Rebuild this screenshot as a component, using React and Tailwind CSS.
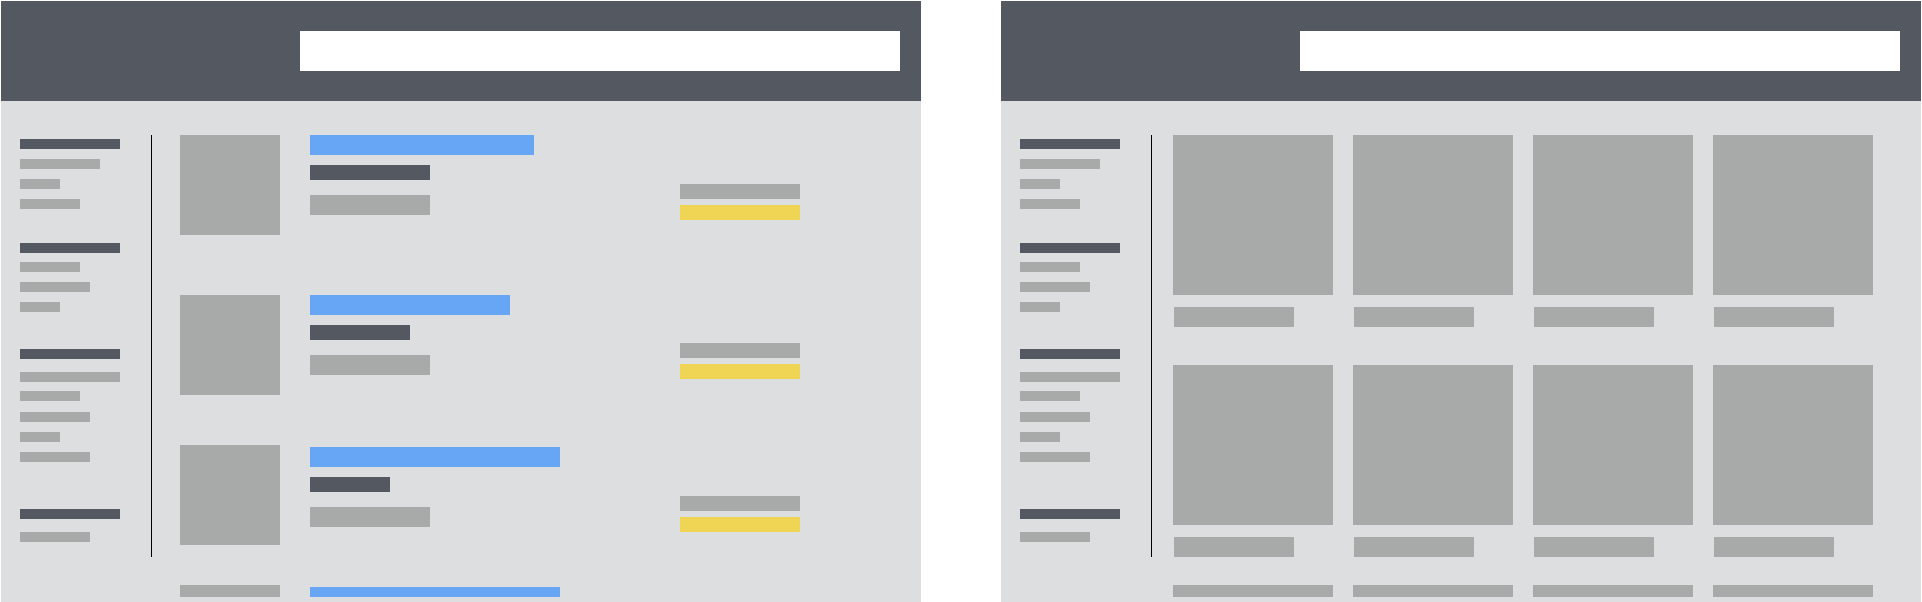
const bar = "bg-[#a8aaa9]";
const dark = "bg-[#535861]";

const listItems = [
  { blue: 224, dark: 120, pad: 0, side: 49, gap: 60 },
  { blue: 200, dark: 100, pad: 0, side: 48, gap: 50 },
  { blue: 250, dark: 80, pad: 2, side: 51, gap: 40 },
  { blue: 250, dark: 100, pad: 2, side: 51, gap: 0 },
];

function Sidebar() {
  return (
    <div className="w-[131px] shrink-0 pt-[4px] flex flex-col">
      <div className={`${dark} h-[10px] w-[100px]`} />
      <div className={`${bar} h-[10px] w-[80px] mt-[10px]`} />
      <div className={`${bar} h-[10px] w-[40px] mt-[10px]`} />
      <div className={`${bar} h-[10px] w-[60px] mt-[10px]`} />

      <div className={`${dark} h-[10px] w-[100px] mt-[34px]`} />
      <div className={`${bar} h-[10px] w-[60px] mt-[9px]`} />
      <div className={`${bar} h-[10px] w-[70px] mt-[10px]`} />
      <div className={`${bar} h-[10px] w-[40px] mt-[10px]`} />

      <div className={`${dark} h-[10px] w-[100px] mt-[37px]`} />
      <div className={`${bar} h-[10px] w-[100px] mt-[13px]`} />
      <div className={`${bar} h-[10px] w-[60px] mt-[9px]`} />
      <div className={`${bar} h-[10px] w-[70px] mt-[11px]`} />
      <div className={`${bar} h-[10px] w-[40px] mt-[10px]`} />
      <div className={`${bar} h-[10px] w-[70px] mt-[10px]`} />

      <div className={`${dark} h-[10px] w-[100px] mt-[47px]`} />
      <div className={`${bar} h-[10px] w-[70px] mt-[13px]`} />
    </div>
  );
}

function Panel({ children, mainOffset }) {
  return (
    <div className="w-[920px] h-[601px] shrink-0 flex flex-col bg-[#dddee0]">
      <header className={`${dark} h-[100px] shrink-0 flex items-center`}>
        <div className="ml-[299px] h-10 w-[600px] bg-white" />
      </header>
      <div className="flex-1 min-h-0 pb-[5px] flex flex-col">
        <div className="flex-1 min-h-0 overflow-hidden flex items-start pt-[34px] pl-[19px]">
          <Sidebar />
          <div className="w-px h-[422px] bg-black shrink-0" />
          <div className={mainOffset}>{children}</div>
        </div>
      </div>
    </div>
  );
}

function ListView() {
  return (
    <div className="flex flex-col">
      {listItems.map((it, i) => (
        <div key={i} className="flex items-start" style={{ marginBottom: it.gap }}>
          <div className={`${bar} h-[100px] w-[100px] shrink-0`} />
          <div className="ml-[30px] w-[370px] flex flex-col" style={{ paddingTop: it.pad }}>
            <div className="h-5 bg-[#67a6f4]" style={{ width: it.blue }} />
            <div className={`${dark} h-[15px] mt-[10px]`} style={{ width: it.dark }} />
            <div className={`${bar} h-5 w-[120px] mt-[15px]`} />
          </div>
          <div className="flex flex-col w-[120px]" style={{ paddingTop: it.side }}>
            <div className={`${bar} h-[15px]`} />
            <div className="h-[15px] mt-[6px] bg-[#f0d454]" />
          </div>
        </div>
      ))}
    </div>
  );
}

function GridView() {
  const rows = [38, 28, 0];
  return (
    <div className="flex flex-col">
      {rows.map((gap, r) => (
        <div key={r} className="grid grid-cols-[repeat(4,160px)] gap-x-5" style={{ marginBottom: gap }}>
          {[0, 1, 2, 3].map((c) => (
            <div key={c} className="flex flex-col">
              <div className={`${bar} h-[160px] w-[160px]`} />
              <div className={`${bar} h-5 w-[120px] mt-3 ml-px`} />
            </div>
          ))}
        </div>
      ))}
    </div>
  );
}

export default function App() {
  return (
    <div className="w-[1922px] h-[602px] overflow-hidden bg-white pt-px pl-px flex gap-[80px] items-start">
      <Panel mainOffset="ml-[28px]">
        <ListView />
      </Panel>
      <Panel mainOffset="ml-[21px]">
        <GridView />
      </Panel>
    </div>
  );
}
